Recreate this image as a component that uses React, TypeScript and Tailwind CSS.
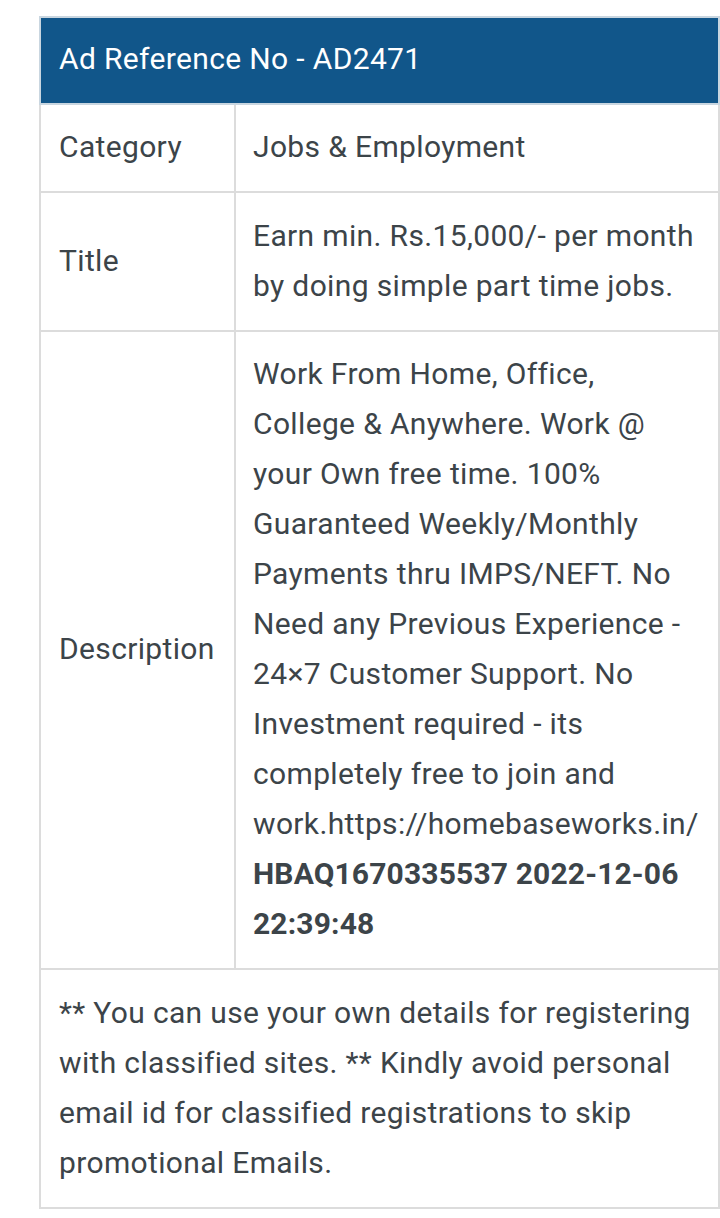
import React from 'react';

const rows: { label: string; value: React.ReactNode }[] = [
    { label: 'Category', value: 'Jobs & Employment' },
    { label: 'Title', value: 'Earn min. Rs.15,000/- per month by doing simple part time jobs.' },
    {
        label: 'Description',
        value: (
            <>
                Work From Home, Office, College &amp; Anywhere. Work @ your Own free time. 100% Guaranteed
                Weekly/Monthly Payments thru IMPS/NEFT. No Need any Previous Experience - 24×7 Customer Support. No
                Investment required - its completely free to join and work.https://homebaseworks.in/
                <span className="font-bold tracking-[0.15px]"> HBAQ1670335537 2022-12-06 22:39:48</span>
            </>
        ),
    },
];

export default function App() {
    return (
        <div className="min-h-[1218px] bg-white pl-[39px] pt-[16px] font-['Roboto',sans-serif] text-[30px] leading-[50px] tracking-[0.35px] text-[#3c4449]">
            <table className="w-[681px] table-fixed border-collapse">
                <colgroup>
                    <col className="w-[195px]" />
                    <col />
                </colgroup>
                <thead>
                    <tr>
                        <th
                            colSpan={2}
                            className="border-2 border-[#c9d6e0] bg-[#11568a] px-[18px] pt-[16px] pb-[18.5px] text-left font-normal text-white"
                        >
                            Ad Reference No - AD2471
                        </th>
                    </tr>
                </thead>
                <tbody>
                    {rows.map((r) => (
                        <tr key={r.label}>
                            <td className="border-2 border-[#dcdcdc] px-[18px] pt-[17.5px] pb-[19px] align-middle">{r.label}</td>
                            <td className="border-2 border-[#dcdcdc] pl-[17px] pr-[16px] pt-[17.5px] pb-[19px] align-middle">{r.value}</td>
                        </tr>
                    ))}
                    <tr>
                        <td colSpan={2} className="border-2 border-[#dcdcdc] px-[18px] pt-[17.5px] pb-[19px]">
                            ** You can use your own details for registering with classified sites. ** Kindly avoid
                            personal email id for classified registrations to skip promotional Emails.
                        </td>
                    </tr>
                </tbody>
            </table>
        </div>
    );
}
